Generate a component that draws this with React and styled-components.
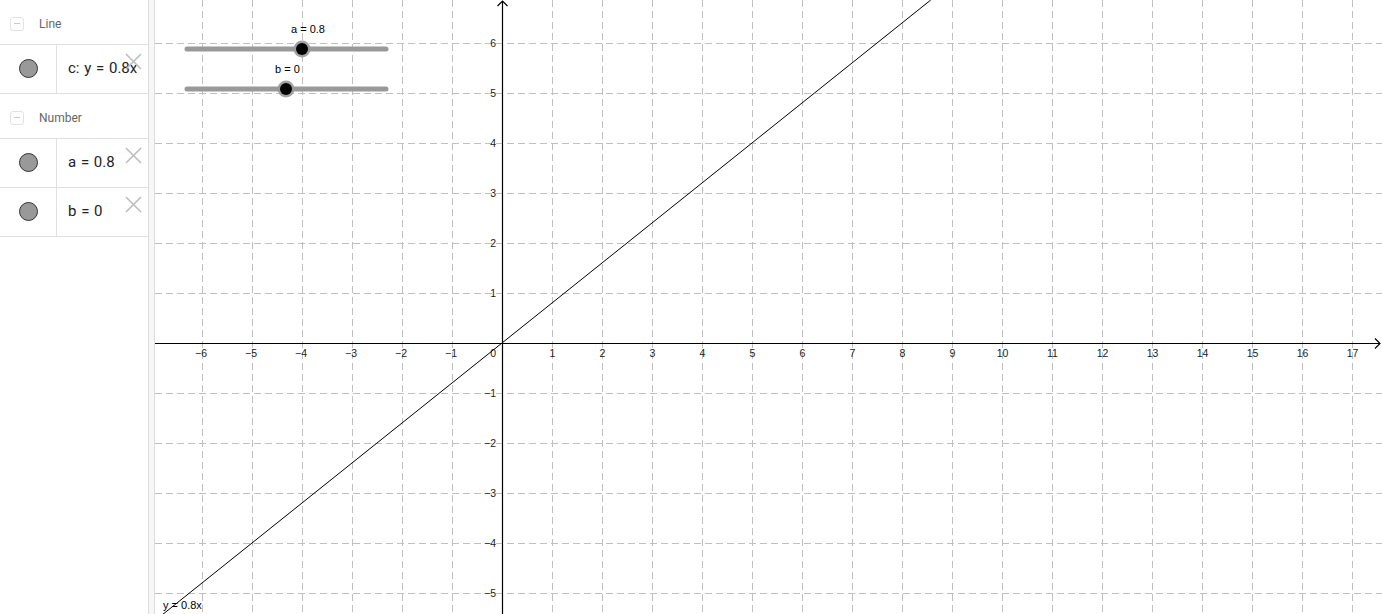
import React from "react";
import styled, { createGlobalStyle } from "styled-components";

const GlobalStyle = createGlobalStyle`
  html, body {
    margin: 0;
    padding: 0;
    background: #fff;
    overflow: hidden;
  }
`;

// origin and scale of the graphics view (screen coords)
const OX = 502;
const OY = 343;
const UNIT = 50;
const LEFT = 155;
const W = 1382;
const H = 614;

const Page = styled.div`
  display: flex;
  width: ${W}px;
  height: ${H}px;
  font-family: Roboto, "Liberation Sans", sans-serif;
`;

const Sidebar = styled.div`
  width: 148px;
  flex-shrink: 0;
  border-right: 1px solid #dcdcdc;
  background: #fff;
  display: flex;
  flex-direction: column;
`;

const Splitter = styled.div`
  width: 5px;
  flex-shrink: 0;
  background: #f7f7f7;
  border-right: 1px solid #dcdcdc;
`;

const Canvas = styled.div`
  flex: 1;
  position: relative;
  overflow: hidden;
`;

const GroupHeader = styled.div`
  box-sizing: border-box;
  height: 45px;
  padding-top: 3px;
  display: flex;
  align-items: center;
  border-bottom: 1px solid #e0e0e0;
  color: #666;
  font-size: 12px;
`;

const Collapse = styled.span`
  width: 12px;
  height: 12px;
  margin: 0 15px 0 10px;
  border: 1px solid #e2e2e2;
  border-radius: 3px;
  position: relative;
  &::after {
    content: "";
    position: absolute;
    left: 3px;
    right: 3px;
    top: 5.5px;
    height: 1px;
    background: #c8c8c8;
  }
`;

const Row = styled.div`
  height: 48px;
  display: flex;
  border-bottom: 1px solid #e0e0e0;
  position: relative;
`;

const Marble = styled.div`
  width: 56px;
  flex-shrink: 0;
  border-right: 1px solid #e0e0e0;
  display: flex;
  align-items: center;
  justify-content: center;
  &::before {
    content: "";
    width: 17px;
    height: 17px;
    border-radius: 50%;
    background: #999;
    border: 1px solid #333;
    margin-top: -1px;
  }
`;

const Formula = styled.div`
  display: flex;
  align-items: center;
  padding: 0 0 3px 11px;
  font-size: 15px;
  color: #222;
  white-space: nowrap;
  overflow: hidden;
  word-spacing: 1px;
`;

const Delete = styled.svg`
  position: absolute;
  right: 6px;
  top: 8px;
  width: 17px;
  height: 17px;
`;

const items = [
  { group: "Line", rows: ["c: y = 0.8x"] },
  { group: "Number", rows: ["a = 0.8", "b = 0"] },
];

function DeleteIcon() {
  return (
    <Delete viewBox="0 0 17 17">
      <path d="M1 1 L16 16 M16 1 L1 16" stroke="#bdbdbd" strokeWidth="1.6" fill="none" />
    </Delete>
  );
}

const sx = (x) => OX + x * UNIT;
const sy = (y) => OY - y * UNIT;

function Slider({ y, value, label, labelX }) {
  const x0 = 187;
  const x1 = 386;
  const kx = 286 + value * 20;
  return (
    <g>
      <line x1={x0} y1={y} x2={x1} y2={y} stroke="#999" strokeWidth="5" strokeLinecap="round" />
      <circle cx={kx} cy={y} r="8.5" fill="#999" opacity="0.9" />
      <circle cx={kx} cy={y} r="6" fill="#000" />
      <text x={labelX} y={y - 16} fontSize="11" fill="#000">{label}</text>
    </g>
  );
}

function Graph() {
  const xs = [];
  for (let k = -6; k <= 17; k++) xs.push(k);
  const ys = [];
  for (let k = -5; k <= 6; k++) ys.push(k);
  const lineStartX = LEFT;
  const lineEndX = OX + OY / 0.8;
  return (
    <svg width={W - LEFT} height={H} viewBox={`${LEFT} 0 ${W - LEFT} ${H}`} style={{ display: "block" }}>
      <g stroke="#c0c0c0" strokeWidth="1" strokeDasharray="7 4">
        {xs.map((k) => k !== 0 && (
          <line key={"vx" + k} x1={sx(k) + 0.5} y1={0} x2={sx(k) + 0.5} y2={H} />
        ))}
        {ys.map((k) => k !== 0 && (
          <line key={"hy" + k} x1={LEFT} y1={sy(k) + 0.5} x2={W} y2={sy(k) + 0.5} />
        ))}
      </g>
      <g stroke="#000" strokeWidth="1.2" fill="none">
        <line x1={LEFT} y1={OY + 0.5} x2={W - 2} y2={OY + 0.5} />
        <path d={`M${W - 7} ${OY - 4.5} L${W - 2} ${OY + 0.5} L${W - 7} ${OY + 5.5}`} />
        <line x1={OX + 0.5} y1={1} x2={OX + 0.5} y2={H} />
        <path d={`M${OX - 4.5} 6 L${OX + 0.5} 1 L${OX + 5.5} 6`} />
      </g>
      <g fontFamily="'Liberation Sans', Arial, sans-serif" fontSize="10.5" fill="#222">
        {xs.map((k) => k !== 0 && (
          <text key={"lx" + k} x={sx(k) + (k < 0 ? -1 : 0.5)} y={OY + 14} textAnchor="middle">
            {k < 0 ? "\u2212" + -k : k}
          </text>
        ))}
        {ys.map((k) => k !== 0 && (
          <text key={"ly" + k} x={OX - 6} y={sy(k) + 4} textAnchor="end">
            {k < 0 ? "\u2212" + -k : k}
          </text>
        ))}
        <text x={OX - 6} y={OY + 14} textAnchor="end">0</text>
      </g>
      <line
        x1={lineStartX}
        y1={OY - 0.8 * (lineStartX - OX)}
        x2={lineEndX}
        y2={0}
        stroke="#000"
        strokeWidth="1"
      />
      <g fontFamily="'Liberation Sans', Arial, sans-serif">
        <Slider y={49} value={0.8} label="a = 0.8" labelX={291} />
        <Slider y={89} value={0} label="b = 0" labelX={275} />
        <text x={163} y={609} fontSize="11" fill="#000">y = 0.8x</text>
      </g>
    </svg>
  );
}

export default function App() {
  return (
    <>
      <GlobalStyle />
      <Page>
        <Sidebar>
          {items.map((it) => (
            <React.Fragment key={it.group}>
              <GroupHeader>
                <Collapse />
                {it.group}
              </GroupHeader>
              {it.rows.map((r) => (
                <Row key={r}>
                  <Marble />
                  <Formula>{r}</Formula>
                  <DeleteIcon />
                </Row>
              ))}
            </React.Fragment>
          ))}
        </Sidebar>
        <Splitter />
        <Canvas>
          <Graph />
        </Canvas>
      </Page>
    </>
  );
}
